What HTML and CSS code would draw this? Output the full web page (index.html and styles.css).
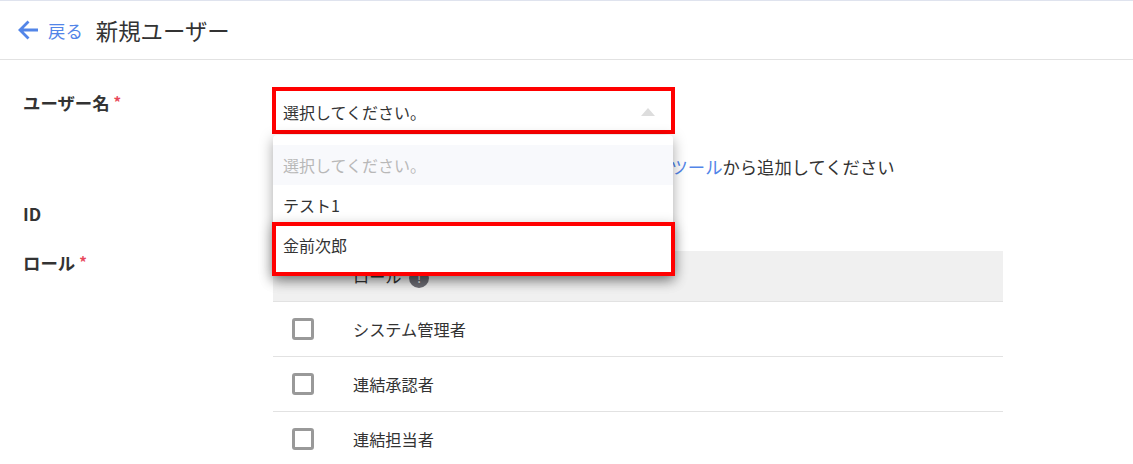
FILE: index.html
```html
<!DOCTYPE html>
<html lang="ja">

<head>
  <meta charset="UTF-8">
  <title>新規ユーザー</title>
  <link rel="stylesheet" href="styles.css">
</head>

<body>

  <header class="page-header">
    <a class="back-link" href="#">
      <svg class="back-icon" width="20" height="20" viewBox="0 0 20 20">
        <path d="M20 10H2.5M10.5 1.5L2 10l8.5 8.5" fill="none" stroke="#5285e8" stroke-width="2.8" />
      </svg>
      戻る
    </a>
    <h1>新規ユーザー</h1>
  </header>

  <form class="user-form">
    <div class="form-row row-name">
      <label class="field-label">ユーザー名<span class="required">*</span></label>
      <div class="field">
        <div class="select-box">
          <div class="select-value">
            選択してください。
            <span class="select-arrow"></span>
          </div>
          <div class="annotation annotation-select"></div>
          <ul class="select-menu">
            <li class="menu-item placeholder">選択してください。</li>
            <li class="menu-item">テスト1</li>
            <li class="menu-item">金前次郎</li>
            <li class="annotation annotation-item"></li>
          </ul>
        </div>
        <p class="hint">対象ユーザーが表示されない場合は、ユーザー管理<a href="#">ツール</a>から追加してください</p>
      </div>
    </div>

    <div class="form-row row-id">
      <label class="field-label">ID</label>
    </div>

    <div class="form-row row-role">
      <label class="field-label">ロール<span class="required">*</span></label>
      <div class="field">
        <table class="role-table">
          <tr class="head-row">
            <th class="check-col"></th>
            <th>ロール <span class="info-icon">!</span></th>
          </tr>
          <tr>
            <td class="check-col"><span class="checkbox"></span></td>
            <td>システム管理者</td>
          </tr>
          <tr>
            <td class="check-col"><span class="checkbox"></span></td>
            <td>連結承認者</td>
          </tr>
          <tr>
            <td class="check-col"><span class="checkbox"></span></td>
            <td>連結担当者</td>
          </tr>
        </table>
      </div>
    </div>
  </form>

</body>

</html>
```

FILE: styles.css
```css
* {
  box-sizing: border-box;
}

html,
body {
  height: 100%;
}

body {
  margin: 0;
  overflow: hidden;
  background: white;
  color: #333;
  font-family: "Noto Sans CJK JP", "Noto Sans", sans-serif;
  font-size: 16px;
  border-top: 1px solid #dfe3ee;
}

.page-header {
  display: flex;
  align-items: center;
  height: 59px;
  padding-left: 18px;
  border-bottom: 1px solid #e2e2e2;
}

.back-link {
  display: flex;
  align-items: center;
  gap: 10px;
  color: #5285e8;
  text-decoration: none;
  font-size: 17.4px;
}

.page-header h1 {
  margin: 0 0 0 13px;
  font-size: 22.4px;
  font-weight: 400;
  line-height: 30px;
}

.user-form {
  padding-left: 23px;
}

.form-row {
  display: grid;
  grid-template-columns: 250px 730px;
}

.field-label {
  font-size: 17.4px;
  font-weight: 700;
  line-height: 24px;
}

.row-name .field-label {
  margin-top: -1px;
}

.required {
  color: #e8475a;
  margin-left: 4px;
  font-size: 15px;
  vertical-align: 2px;
}

.row-name {
  padding-top: 31px;
  height: 142px;
}

.row-id {
  height: 48px;
}

.select-box {
  position: relative;
  width: 400px;
}

.select-value {
  display: flex;
  align-items: center;
  justify-content: space-between;
  height: 42px;
  padding: 0 18px 0 10px;
  line-height: 42px;
}

.select-arrow {
  width: 0;
  height: 0;
  border-left: 7px solid transparent;
  border-right: 7px solid transparent;
  border-bottom: 8px solid #ddd;
}

.annotation {
  position: absolute;
  border: 4px solid #f00;
  pointer-events: none;
}

.annotation-select {
  top: -4px;
  left: -1px;
  width: 403px;
  height: 47px;
}

.select-menu {
  position: absolute;
  z-index: 2;
  top: 44px;
  left: 0;
  width: 400px;
  margin: 0;
  padding: 10px 0;
  list-style: none;
  background: white;
  border-radius: 4px;
  box-shadow: 0 4px 14px rgba(0, 0, 0, 0.35);
}

.menu-item {
  height: 40px;
  padding: 0 10px;
  line-height: 40px;
}

.menu-item.placeholder {
  background: #f8f9fc;
  color: #b8b8b8;
}

.annotation-item {
  top: 87px;
  left: -1px;
  width: 403px;
  height: 54px;
  box-shadow: 0 4px 12px rgba(0, 0, 0, 0.3);
}

.hint {
  margin: 22px 0 0;
  font-size: 17.32px;
  line-height: 24px;
  white-space: nowrap;
}

.hint a {
  color: #5285e8;
  text-decoration: none;
}

.role-table {
  width: 730px;
  border-collapse: collapse;
  margin-top: 1px;
}

.role-table tr {
  height: 55px;
  border-bottom: 1px solid #e2e2e2;
}

.role-table .head-row {
  height: 50px;
  background: #f0f0f0;
}

.role-table th,
.role-table td {
  padding: 0;
  text-align: left;
  font-size: 16.2px;
  font-weight: 400;
}

.check-col {
  width: 80px;
  padding-left: 19px !important;
}

.checkbox {
  display: block;
  width: 22px;
  height: 22px;
  border: 3px solid #999;
  border-radius: 3px;
}

.info-icon {
  display: inline-block;
  width: 20px;
  height: 20px;
  margin-left: 4px;
  border-radius: 50%;
  background: #6d6d75;
  color: white;
  font-size: 13px;
  line-height: 20px;
  text-align: center;
}
```
